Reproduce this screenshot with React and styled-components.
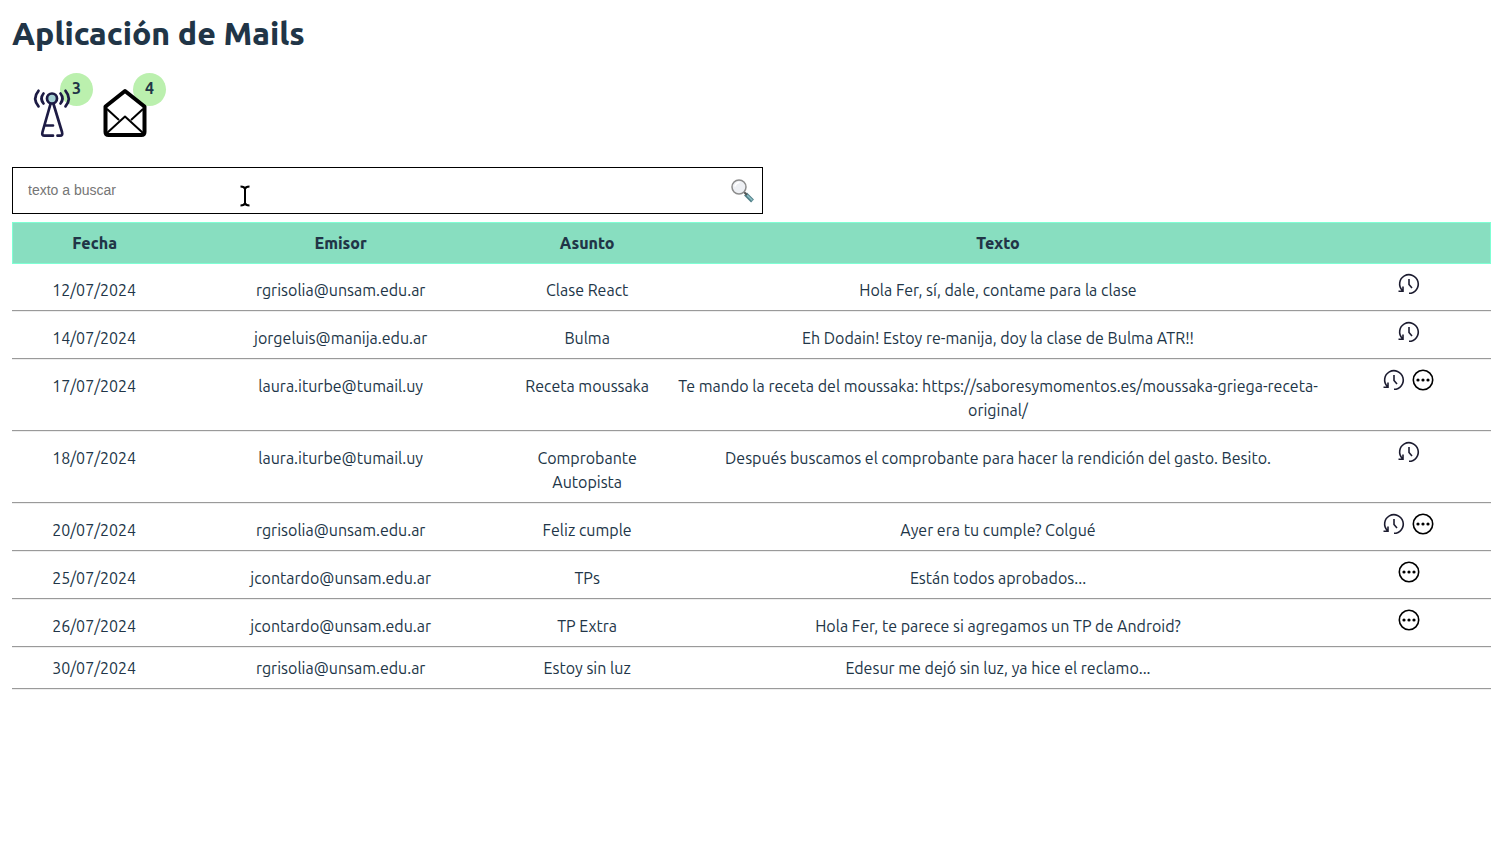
import React from "react";
import styled, { createGlobalStyle } from "styled-components";

const GlobalStyle = createGlobalStyle`
  * { box-sizing: border-box; }
  body {
    margin: 0;
    background: #fff;
    color: #213547;
    font-family: Ubuntu, "Noto Sans", sans-serif;
    font-size: 16px;
    line-height: 24px;
  }
`;

const Page = styled.main`
  padding: 12px 10px 12px 12px;
`;

const Title = styled.h1`
  margin: 0;
  font-size: 32px;
  line-height: 42px;
  font-weight: 800;
`;

const Counters = styled.div`
  display: flex;
  gap: 25px;
  padding: 35px 20px 30px;
`;

const Counter = styled.div`
  position: relative;
  width: 48px;
  height: 48px;

  svg {
    position: relative;
    display: block;
    overflow: visible;
  }
`;

const Badge = styled.span`
  position: absolute;
  top: -16px;
  right: -13px;
  width: 33px;
  height: 33px;
  border-radius: 50%;
  background: #bbf0ae;
  font-weight: 700;
  line-height: 30px;
  text-align: center;
`;

const SearchBox = styled.label`
  display: flex;
  align-items: center;
  width: 50vw;
  height: 47px;
  margin-bottom: 8px;
  padding: 0 6px 0 15px;
  border: 1px solid #000;
`;

const SearchInput = styled.input`
  flex: 1;
  min-width: 0;
  padding: 0 0 2px;
  border: 0;
  outline: 0;
  background: transparent;
  font: 14px "Liberation Sans", Arial, sans-serif;

  &::placeholder { color: #757575; }
`;

const Cursor = styled.svg`
  position: absolute;
  left: 239px;
  top: 185px;
`;

const Table = styled.table`
  width: 100%;
  table-layout: fixed;
  border-spacing: 0;
  text-align: center;
`;

const Column = styled.col`
  width: ${(p) => (p.$share * 100) / 9}%;
`;

const HeadCell = styled.th`
  padding: 8px;
  background: #88dec0;
  border: 0 solid #7fffd4;
  border-width: 1px 0;
  font-weight: 800;

  &:first-child { border-left-width: 1px; }
  &:last-child { border-right-width: 1px; }
`;

const Cell = styled.td`
  padding: 8px 0;
  border-bottom: 2px groove #eee;
  vertical-align: baseline;
`;

const IconButton = styled.button`
  display: inline-block;
  width: 24px;
  height: 24px;
  padding: 0;
  border: 0;
  background: none;
  vertical-align: baseline;

  & + & { margin-left: 5px; }
  svg { display: block; }
`;

const AntennaIcon = () => (
  <svg width="48" height="48" viewBox="0 0 48 48" fill="none" stroke="#1d1b44" strokeWidth="2.7" strokeLinecap="round" strokeLinejoin="round">
    <circle cx="20" cy="9.500" r="5" fill="#a4cfd2" />
    <path d="M18.500 15 10.500 43q-1 3.700 2 3.700H21M21.500 15l8.500 28q1 3.700-2 3.700h-2.500M13.500 36.500H21" />
    <path d="M11.500 4.500q-4 5 0 10M6.500 1.800q-6.500 7.700 0 15.600M28.500 4.500q4 5 0 10M33.500 1.800q6.500 7.700 0 15.600" />
  </svg>
);

const EnvelopeIcon = () => (
  <svg width="48" height="48" viewBox="0 0 48 48" fill="none" stroke="#000" strokeLinejoin="round">
    <path d="M20 2 .5 17.500V43q0 3 3.200 3h32.600Q39.500 46 39.500 43V17.500Z" fill="#fff" strokeWidth="4" />
    <path d="M2 20 14 31M38 20 26 31M2 44 20 27.500 38 44" strokeWidth="2" />
  </svg>
);

const MagnifierIcon = () => (
  <svg width="26" height="26" viewBox="0 0 26 26" fill="none" strokeLinecap="round">
    <path d="m15.500 16 7 7" stroke="#507f87" strokeWidth="4" strokeLinecap="butt" />
    <path d="m16 16 6 6" stroke="#8fc0c7" strokeWidth="1.500" />
    <path d="m14 14 2.500 2.500" stroke="#555" strokeWidth="2" />
    <circle cx="9" cy="9" r="7" fill="#eef0f4" stroke="#8c8c8c" strokeWidth="1.500" />
    <path d="M5 8q1-3 4-3.500" stroke="#fff" strokeWidth="1.500" />
  </svg>
);

const HistoryIcon = () => (
  <svg width="24" height="24" viewBox="0 0 24 24" fill="none" stroke="#1c1c30" strokeWidth="1.600">
    <path d="M5.300 18.500A9.300 9.300 0 1 1 12 21.300M1.500 19.200H6V14.500M12 7v5.500l3 3.500" />
  </svg>
);

const MoreIcon = () => (
  <svg width="24" height="24" viewBox="0 0 24 24" fill="none" stroke="#000" strokeWidth="1.600">
    <circle cx="12" cy="12" r="9.700" />
    <g fill="#000" stroke="none">
      <circle cx="7" cy="12" r="1.600" />
      <circle cx="12" cy="12" r="1.600" />
      <circle cx="17" cy="12" r="1.600" />
    </g>
  </svg>
);

const mails = [
  { date: "12/07/2024", from: "rgrisolia@unsam.edu.ar", subject: "Clase React", text: "Hola Fer, sí, dale, contame para la clase", old: true },
  { date: "14/07/2024", from: "jorgeluis@manija.edu.ar", subject: "Bulma", text: "Eh Dodain! Estoy re-manija, doy la clase de Bulma ATR!!", old: true },
  { date: "17/07/2024", from: "laura.iturbe@tumail.uy", subject: "Receta moussaka", text: "Te mando la receta del moussaka: https://saboresymomentos.es/moussaka-griega-receta-original/", old: true, more: true },
  { date: "18/07/2024", from: "laura.iturbe@tumail.uy", subject: "Comprobante Autopista", text: "Después buscamos el comprobante para hacer la rendición del gasto. Besito.", old: true },
  { date: "20/07/2024", from: "rgrisolia@unsam.edu.ar", subject: "Feliz cumple", text: "Ayer era tu cumple? Colgué", old: true, more: true },
  { date: "25/07/2024", from: "jcontardo@unsam.edu.ar", subject: "TPs", text: "Están todos aprobados...", more: true },
  { date: "26/07/2024", from: "jcontardo@unsam.edu.ar", subject: "TP Extra", text: "Hola Fer, te parece si agregamos un TP de Android?", more: true },
  { date: "30/07/2024", from: "rgrisolia@unsam.edu.ar", subject: "Estoy sin luz", text: "Edesur me dejó sin luz, ya hice el reclamo..." },
];

export default function App() {
  return (
    <Page>
      <GlobalStyle />
      <Title>Aplicación de Mails</Title>
      <Counters>
        <Counter>
          <Badge>3</Badge>
          <AntennaIcon />
        </Counter>
        <Counter>
          <Badge>4</Badge>
          <EnvelopeIcon />
        </Counter>
      </Counters>
      <SearchBox>
        <SearchInput type="text" placeholder="texto a buscar" aria-label="texto a buscar" />
        <MagnifierIcon />
      </SearchBox>
      <Table>
        <colgroup>
          <Column $share={1} />
          <Column $share={2} />
          <Column $share={1} />
          <Column $share={4} />
          <Column $share={1} />
        </colgroup>
        <thead>
          <tr>
            <HeadCell>Fecha</HeadCell>
            <HeadCell>Emisor</HeadCell>
            <HeadCell>Asunto</HeadCell>
            <HeadCell>Texto</HeadCell>
            <HeadCell />
          </tr>
        </thead>
        <tbody>
          {mails.map((m) => (
            <tr key={m.date}>
              <Cell>{m.date}</Cell>
              <Cell>{m.from}</Cell>
              <Cell>{m.subject}</Cell>
              <Cell>{m.text}</Cell>
              <Cell>
                {m.old && <IconButton type="button" aria-label="Antiguo"><HistoryIcon /></IconButton>}
                {m.more && <IconButton type="button" aria-label="Texto largo"><MoreIcon /></IconButton>}
              </Cell>
            </tr>
          ))}
        </tbody>
      </Table>
      <Cursor width="12" height="22" viewBox="0 0 12 22" fill="none" stroke="#000" strokeWidth="2" aria-hidden="true">
        <path d="M1.500 1.500Q5.500 1.500 6 4Q6.500 1.500 10.500 1.500M1.500 20.500Q5.500 20.500 6 18Q6.500 20.500 10.500 20.500M6 3.500V18.500" />
      </Cursor>
    </Page>
  );
}
